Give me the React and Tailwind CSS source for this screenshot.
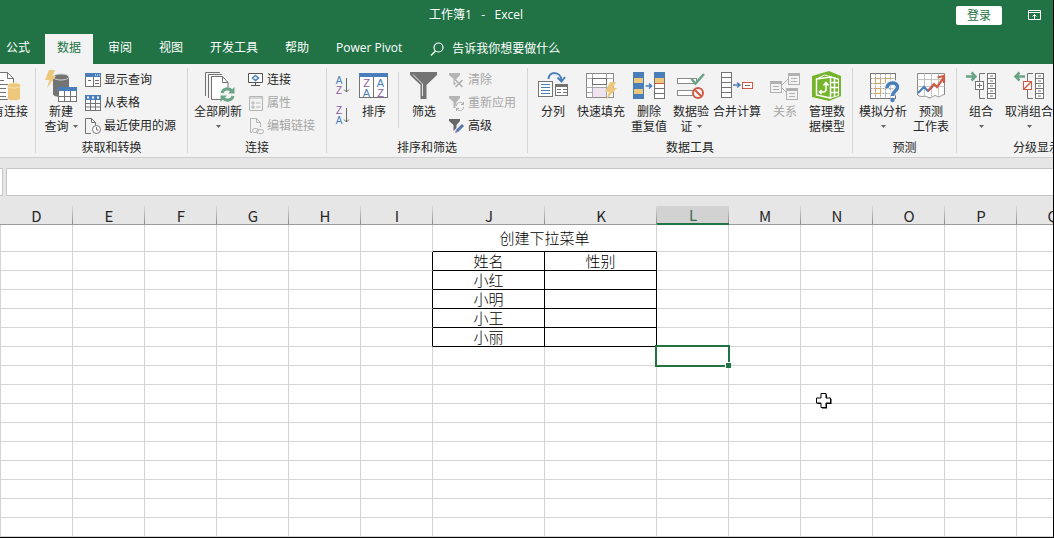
import React, { useState } from 'react';

const BLUE = '#4a7ebb';
const GRAY = '#737373';
const TAN = '#ecc77c';
const RED = '#d05a45';
const GREEN = '#6aa386';

/* ---------- icons ---------- */

const Icon = ({ small, children }) => (
    <svg
        className={`${small ? 'w-4 h-4' : 'w-8 h-8'} shrink-0 overflow-visible`}
        viewBox={small ? '0 0 16 16' : '0 0 32 32'}
        fill="none"
        stroke={GRAY}
        strokeWidth="1"
        aria-hidden="true"
    >
        {children}
    </svg>
);

const Bolt = ({ d }) => <path d={d} fill={TAN} stroke="none" />;

const ExistingIcon = () => (
    <Icon>
        <path d="M4.5 2.5h15l6 6v21h-21z" fill="#fff" />
        <path d="M19.5 2.5v6h6M8 10.5h8M8 14.5h12M8 18.5h10M8 22.5h10M8 26.5h10" />
        <path d="M19.5 15.5v13c0 3 13 3 13 0v-13z" fill={TAN} stroke="#f3f3f3" />
        <ellipse cx="26" cy="15.5" rx="6.5" ry="2.5" fill={TAN} stroke="#f7e3b6" />
    </Icon>
);

const NewQueryIcon = () => (
    <Icon>
        <path d="M8 7v17c0 4 16 4 16 0V7z" fill={GRAY} stroke="none" />
        <ellipse cx="16" cy="7" rx="8" ry="3" fill={GRAY} stroke="#cfcfcf" />
        <Bolt d="M4 0h6L7.500 6H11L2 18l2.500-8H0z" />
        <rect x="13.500" y="17.500" width="18" height="14" fill="#fff" />
        <path d="M13 17h19v4H13z" fill={BLUE} stroke="none" />
        <path d="M13.500 26.500h18M19.500 21v10.500M25.500 21v10.500" />
    </Icon>
);

const ShowQueryIcon = () => (
    <Icon small>
        <rect x=".5" y="1.500" width="15" height="13" fill="#fff" />
        <path d="M0 1h16v4H0z" fill={BLUE} stroke="none" />
        <path d="M10 3h1M12 3h1M14 3h1" stroke="#fff" />
        <path d="M8.500 5v9.500M3 8.500h3M10 8.500h4M10 11.500h4" />
    </Icon>
);

const FromTableIcon = () => (
    <Icon small>
        <rect x=".5" y=".5" width="15" height="15" fill="#fff" />
        <path d="M0 0h16v5H0z" fill={BLUE} stroke="none" />
        <path d="M2 2.500h2M7 2.500h2M12 2.500h2" stroke="#fff" strokeWidth="2" />
        <path d="M0 8.500h16M0 12h16M5.500 5v11M10.500 5v11" />
    </Icon>
);

const RecentIcon = () => (
    <Icon small>
        <path d="M6 15.500H.5V.5h6l4 4V7M6.500.5v4h4" />
        <circle cx="11.500" cy="11.500" r="4" fill="#fff" />
        <path d="M11.500 9v3h2" />
    </Icon>
);

const RefreshIcon = () => (
    <Icon>
        <path d="M3.500 26V2.500H18M6.500 28V4.500H20" />
        <path d="M9.500 6.500h11l5.500 6v17H9.500z" fill="#fff" />
        <path d="M20.500 6.500v6h5.500" />
        <circle cx="25.500" cy="24.500" r="7.500" fill="#f3f3f3" stroke="none" />
        <path d="M20 23c1-4.500 7-5.500 10-2M31 26c-1 4.500-7 5.500-10 2" stroke={GREEN} strokeWidth="3" />
        <path d="M32.500 17v6.500H26zM18.500 32v-6.500H25z" fill={GREEN} stroke="none" />
    </Icon>
);

const ConnectionIcon = () => (
    <Icon small>
        <path d="M.5 1.500h14v9H.5z" fill="#fff" stroke="#555" />
        <path d="M3 13.500h9M7.500 11v2" stroke="#555" />
        <path d="M7.500 3.500l3 2.500-3 2.500-3-2.500z" stroke={BLUE} strokeWidth="1.500" />
    </Icon>
);

const PropertiesIcon = () => (
    <Icon small>
        <g stroke="#b5b5b5">
            <path d="M1.500 1.500h13v14h-13zM1 3h14" />
            <path d="M4 7h2v2H4zM4 11h2v2H4zM8 8h4.500M8 12h4.500" />
        </g>
    </Icon>
);

const EditLinkIcon = () => (
    <Icon small>
        <g stroke="#b5b5b5">
            <path d="M4 14.500H2.500V.5h6l4 4V9M8.500.5v4h4" />
            <rect x="4.500" y="10.500" width="6" height="4" rx="2" />
            <rect x="8.500" y="11.500" width="7" height="4" rx="2" />
        </g>
    </Icon>
);

const letterFont = 'Liberation Sans, sans-serif';

const SortIcon = ({ top, bottom, topColor, bottomColor }) => (
    <svg className="w-4 h-5 overflow-visible" viewBox="0 0 16 20" fill="none" aria-hidden="true">
        <text x="5" y="8" fontSize="10" textAnchor="middle" fontFamily={letterFont} fill={topColor}>{top}</text>
        <text x="5" y="18" fontSize="10" textAnchor="middle" fontFamily={letterFont} fill={bottomColor}>{bottom}</text>
        <path d="M12.500 2v14M10 13.500l2.500 2.500 2.500-2.500" stroke="#666" />
    </svg>
);

const SortDialogIcon = () => (
    <Icon>
        <rect x="1.500" y="3.500" width="28" height="24" fill="#fff" />
        <path d="M1 3h29v4H1z" fill={BLUE} stroke="none" />
        <path d="M15.500 7v20.500" />
        <g stroke="none" fontSize="11" textAnchor="middle" fontFamily={letterFont}>
            <text x="8.500" y="16.500" fill="#8d5aa0">Z</text>
            <text x="8.500" y="26.500" fill={BLUE}>A</text>
            <text x="22.500" y="16.500" fill={BLUE}>A</text>
            <text x="22.500" y="26.500" fill="#8d5aa0">Z</text>
        </g>
    </Icon>
);

const FilterIcon = () => (
    <Icon>
        <path d="M2 2h27v3L18.500 15v14h-6V15L2 5z" fill={GRAY} stroke="none" />
        <path d="M5 4.500l9.500 9.500v12" stroke="#e4e4e4" />
    </Icon>
);

const ClearIcon = () => (
    <Icon small>
        <path d="M0 1h11v2L7.500 7v6h-3V7L0 3z" fill="#b5b5b5" stroke="none" />
        <path d="M6.500 8l7 7M13.500 8l-7 7" stroke="#f3f3f3" strokeWidth="4" />
        <path d="M6.500 8l7 7M13.500 8l-7 7" stroke="#ababab" strokeWidth="1.500" />
    </Icon>
);

const ReapplyIcon = () => (
    <Icon small>
        <path d="M0 1h11v2L7.500 7v6h-3V7L0 3z" fill="#b5b5b5" stroke="none" />
        <circle cx="11" cy="11.500" r="4.500" fill="#f3f3f3" stroke="none" />
        <path d="M7.500 11c0-4 5-5 7-1.500V7M14.500 9.500H12M14.500 12c0 4-5 5-7 1.500V16M7.500 13.500H10" stroke="#ababab" />
    </Icon>
);

const AdvancedIcon = () => (
    <Icon small>
        <path d="M0 1h11v2L7.500 7v6h-3V7L0 3z" fill="#666" stroke="none" />
        <path d="M6.500 14.500L14 7" stroke="#f3f3f3" strokeWidth="5" />
        <path d="M8 13l6-6" stroke="#5674b5" strokeWidth="3" />
        <path d="M6 15l1-3 2 2z" fill="#8a63a8" stroke="none" />
    </Icon>
);

const SplitIcon = () => (
    <Icon>
        <rect x="1.500" y="11.500" width="14" height="15" fill="#fff" />
        <path d="M4 14.500h9M4 17.500h9M4 20.500h9M4 23.500h9" stroke={BLUE} />
        <rect x="18.500" y="14.500" width="12" height="11" fill="#fff" />
        <path d="M18 14h13v3H18z" fill={GRAY} stroke="none" />
        <path d="M20 19.500h4M26 19.500h4M20 22.500h4M26 22.500h4" />
        <path d="M11.500 9c0-8 12-8 13 1" stroke={BLUE} strokeWidth="2" />
        <path d="M20.500 7.500l4 4 3.500-4.500" stroke={BLUE} strokeWidth="2" />
    </Icon>
);

const FlashFillIcon = () => (
    <Icon>
        <rect x="1.500" y="3.500" width="27" height="24" fill="#fff" stroke="#8a8a8a" />
        <path d="M8 18h13v9H8z" fill="#efe3ef" stroke="none" />
        <path d="M1.500 8.500h27M1.500 17.500h27M1.500 22.500h6M7.500 3.500v24M21.500 3.500v24" stroke="#a8a8a8" />
        <rect x="7.500" y="8.500" width="14" height="6" fill="#fff" stroke={GRAY} />
        <Bolt d="M25 12h6l-3 6h4L21 30l3-8h-4z" />
    </Icon>
);

const DedupeIcon = () => (
    <Icon>
        <path d="M0 2h11v27H0z" fill={BLUE} stroke="none" />
        <path d="M1 8h9v5H1zM1 19h9v5H1z" fill={TAN} stroke="none" />
        <path d="M12.500 16h6M16 13.500l2.500 2.500-2.500 2.500" stroke={BLUE} strokeWidth="1.500" />
        <rect x="21.500" y="2.500" width="10" height="26" fill="#fff" />
        <path d="M21 2h11v6H21z" fill={BLUE} stroke="none" />
        <path d="M22 8h9v5h-9z" fill={TAN} stroke="none" />
        <path d="M21.500 13.500h10" stroke={RED} />
        <path d="M21.500 18.500h10M21.500 23.500h10" />
    </Icon>
);

const ValidateIcon = () => (
    <Icon>
        <rect x="2.500" y="8.500" width="19" height="5" fill="#fff" stroke="#8a8a8a" />
        <rect x="2.500" y="20.500" width="19" height="5" fill="#fff" stroke="#8a8a8a" />
        <path d="M16.500 9l4 4.500L29 4" stroke={GREEN} strokeWidth="2.500" />
        <circle cx="23" cy="23" r="5" fill="#f3f3f3" stroke={RED} strokeWidth="2" />
        <path d="M19.500 19.500l7 7" stroke={RED} strokeWidth="2" />
    </Icon>
);

const ConsolidateIcon = () => (
    <Icon>
        <rect x=".5" y="2.500" width="10" height="25" fill="#fff" />
        <path d="M.5 7.500h10M.5 12.500h10M.5 17.500h10M.5 22.500h10" />
        <path d="M12 15h7M16 12.500l3 2.500-3 2.500" stroke={BLUE} strokeWidth="1.500" />
        <rect x="21.500" y="12.500" width="10" height="6" fill="#fff" stroke={RED} />
        <path d="M24 15.500h5" />
    </Icon>
);

const RelationIcon = () => (
    <Icon>
        <path d="M13 15l6-6M13 18l5 5" stroke="#b0b0b0" />
        {[[1, 11], [19, 3], [17, 18]].map(([x, y]) => (
            <g key={x} transform={`translate(${x} ${y})`} stroke="#b0b0b0">
                <rect x=".5" y=".5" width="11" height="11" fill="#f3f3f3" />
                <path d="M0 1.500h12" strokeWidth="3" />
                <path d="M3 5.500h6M3 8.500h6" />
            </g>
        ))}
    </Icon>
);

const DataModelIcon = () => (
    <Icon>
        <path d="M1 6L18 1l12 5v20l-12 5L1 27z" fill="#74b52b" stroke="none" />
        <g stroke="#fff">
            <path d="M5.500 9l14-2v21l-14-3z" strokeWidth="1.500" />
            <path d="M5.500 9l8-4 14 4-8-2M19.500 7l8 2.500v16l-8 2.500" />
            <path d="M19.500 12.500h8M19.500 17.500h8M19.500 22.500h8M23.500 8v19" strokeWidth="1.500" />
            <path d="M9 22h3.500c2 0 2.500-1 2.500-3v-6M12.500 15.500L15 12.500l2.500 3M10.500 20L8.500 22l2 2" strokeWidth="1.500" />
        </g>
    </Icon>
);

const WhatIfIcon = () => (
    <Icon>
        <rect x="3.500" y="3.500" width="25" height="25" fill="#fff" />
        <path d="M3.500 8.500h25M3.500 13.500h25M3.500 18.500h25M3.500 23.500h25M8.500 3.500v25M13.500 3.500v25M18.500 3.500v25M23.500 3.500v25" stroke="#a0a0a0" strokeDasharray="2 1" />
        <path d="M8.500 8.500h5v5h-5zM18.500 8.500h5v5h-5zM8.500 18.500h5v5h-5z" fill="#fff" stroke="#dca05c" />
        <path d="M20 17c0-6 10-6 10-.5 0 4-4.500 4-4.500 9" stroke="#f3f3f3" strokeWidth="6" />
        <path d="M20 18c0-6.500 10.500-6.500 10.500-1 0 4-5 4-5 9" stroke={BLUE} strokeWidth="3.500" />
        <circle cx="25.500" cy="30" r="2.200" fill={BLUE} stroke="none" />
    </Icon>
);

const ForecastIcon = () => (
    <Icon>
        <path d="M2.500 3.500h27v21c-3 0-5 4-8 1.500-3-2-5 4-9 1-3-2-6 1-10-2z" fill="#fff" stroke="#8a8a8a" />
        <path d="M2.500 9.500h27M2.500 16.500h27M9.500 3.500v23M16.500 3.500v23M23.500 3.500v22" stroke="#c4c4c4" />
        <path d="M3 23l6-6 4 4 5-5" stroke={BLUE} strokeWidth="2.200" />
        <path d="M13 21l6-7 3 3 6.500-9" stroke={RED} strokeWidth="2.200" />
        <path d="M22.500 7.500L29 6v7" stroke={RED} strokeWidth="2.200" />
    </Icon>
);

const OutlineIcon = ({ ungroup }) => (
    <Icon>
        {ungroup ? (
            <path d="M12 6.500H3M6.500 2.500L2.500 6.500l4 4" stroke={GREEN} strokeWidth="2.500" />
        ) : (
            <path d="M1 6.500h9M6.500 2.500l4 4-4 4" stroke={GREEN} strokeWidth="2.500" />
        )}
        <path d="M20 3.500h-5.500V11M14.500 20v8.500H20" />
        <rect x="10.500" y="11.500" width="8" height="8" fill="#fff" stroke={ungroup ? RED : GRAY} />
        {ungroup ? <path d="M11 19l7-7" stroke={RED} strokeWidth="1.500" /> : <path d="M12 15.500h5M14.500 13v5" />}
        <rect x="22.500" y="3.500" width="8" height="25" fill="#fff" />
        <path d="M22.500 8.500h8M22.500 13.500h8M22.500 18.500h8M22.500 23.500h8M25 6h3M25 11h3M25 16h3M25 21h3M25 26h3" />
    </Icon>
);

const Caret = () => (
    <svg className="w-[5px] h-[3px] shrink-0" viewBox="0 0 5 3" aria-hidden="true">
        <path d="M0 0h5L2.500 3z" fill="#666" />
    </svg>
);

/* ---------- ribbon ---------- */

const BigButton = ({ icon, lines, caret, width = 'w-12', disabled }) => (
    <button
        disabled={disabled}
        className={`${width} shrink-0 flex flex-col items-center gap-0.5 pt-0.5 whitespace-nowrap ${disabled ? 'text-[#a6a6a6]' : ''}`}
    >
        {icon}
        <span className="flex flex-col items-center leading-[15px]">
            <span>{lines[0]}</span>
            <span className="flex items-center gap-1 h-[15px]">
                {lines[1]}
                {caret && <Caret />}
            </span>
        </span>
    </button>
);

const SmallButton = ({ icon, label, disabled }) => (
    <button
        disabled={disabled}
        className={`flex items-center gap-[3px] h-[23px] whitespace-nowrap ${disabled ? 'text-[#a6a6a6]' : ''}`}
    >
        {icon}
        {label}
    </button>
);

const Group = ({ label, className = '', children }) => (
    <>
        <section className="shrink-0 flex flex-col" aria-label={label}>
            <div className={`flex h-[72px] ${className}`}>{children}</div>
            <div className="h-4 leading-4 text-center whitespace-nowrap">{label}</div>
        </section>
        <span className="w-px h-[85px] bg-[#d5d5d5] shrink-0 last:hidden" />
    </>
);

const Ribbon = () => (
    <div className="flex shrink-0 pt-1 pb-px bg-[#f3f3f3] border-b border-[#cfcfcf] overflow-hidden">
        <div className="w-[35px] flex justify-end pr-[7px] shrink-0">
            <BigButton icon={<ExistingIcon />} lines={['现有连接']} />
        </div>
        <span className="w-px h-[85px] bg-[#d5d5d5] shrink-0" />
        <Group label="获取和转换" className="pl-1 pr-[11px] gap-[3px]">
            <BigButton icon={<NewQueryIcon />} lines={['新建', '查询']} caret width="w-[42px]" />
            <div className="flex flex-col">
                <SmallButton icon={<ShowQueryIcon />} label="显示查询" />
                <SmallButton icon={<FromTableIcon />} label="从表格" />
                <SmallButton icon={<RecentIcon />} label="最近使用的源" />
            </div>
        </Group>
        <Group label="连接" className="pl-1 pr-[11px] gap-1">
            <BigButton icon={<RefreshIcon />} lines={['全部刷新']} caret width="w-[52px]" />
            <div className="flex flex-col">
                <SmallButton icon={<ConnectionIcon />} label="连接" />
                <SmallButton icon={<PropertiesIcon />} label="属性" disabled />
                <SmallButton icon={<EditLinkIcon />} label="编辑链接" disabled />
            </div>
        </Group>
        <Group label="排序和筛选" className="pl-[7px] pr-[11px]">
            <div className="flex flex-col gap-2.5 pt-2">
                <button aria-label="升序">
                    <SortIcon top="A" bottom="Z" topColor={BLUE} bottomColor="#8d5aa0" />
                </button>
                <button aria-label="降序">
                    <SortIcon top="Z" bottom="A" topColor="#8d5aa0" bottomColor={BLUE} />
                </button>
            </div>
            <BigButton icon={<SortDialogIcon />} lines={['排序']} />
            <span className="w-px h-14 mt-1 mr-[3px] bg-[#d5d5d5]" />
            <BigButton icon={<FilterIcon />} lines={['筛选']} width="w-11" />
            <div className="flex flex-col pl-[3px]">
                <SmallButton icon={<ClearIcon />} label="清除" disabled />
                <SmallButton icon={<ReapplyIcon />} label="重新应用" disabled />
                <SmallButton icon={<AdvancedIcon />} label="高级" />
            </div>
        </Group>
        <Group label="数据工具" className="pl-px pr-[3px]">
            <BigButton icon={<SplitIcon />} lines={['分列']} />
            <BigButton icon={<FlashFillIcon />} lines={['快速填充']} />
            <BigButton icon={<DedupeIcon />} lines={['删除', '重复值']} />
            <BigButton icon={<ValidateIcon />} lines={['数据验', '证']} caret width="w-9" />
            <BigButton icon={<ConsolidateIcon />} lines={['合并计算']} width="w-14" />
            <BigButton icon={<RelationIcon />} lines={['关系']} width="w-10" disabled />
            <BigButton icon={<DataModelIcon />} lines={['管理数', '据模型']} width="w-11" />
        </Group>
        <Group label="预测" className="pl-1.5 pr-px">
            <BigButton icon={<WhatIfIcon />} lines={['模拟分析']} caret />
            <BigButton icon={<ForecastIcon />} lines={['预测', '工作表']} />
        </Group>
        <Group label="分级显示" className="pr-16">
            <BigButton icon={<OutlineIcon />} lines={['组合']} caret />
            <BigButton icon={<OutlineIcon ungroup />} lines={['取消组合']} caret />
        </Group>
    </div>
);

/* ---------- header ---------- */

const tabs = ['公式', '数据', '审阅', '视图', '开发工具', '帮助', 'Power Pivot'];

const Header = () => {
    const [activeTab, setActiveTab] = useState('数据');

    return (
        <header className="bg-[#217346] text-white shrink-0">
            <div className="flex items-center h-[34px] pr-3">
                <h1 className="flex-1 text-center whitespace-pre pr-1 pb-1">工作簿1   -   Excel</h1>
                <button className="w-[46px] h-[19px] mr-[26px] mb-[3px] rounded-xs bg-white text-[#217346] leading-[19px]">登录</button>
                <button aria-label="功能区显示选项" className="mb-1">
                    <svg className="w-[13px] h-2.5" viewBox="0 0 13 10" fill="none" stroke="#fff">
                        <path d="M.5.5h12v9H.5zM.5 2.500h12M6.500 9V4.500M4.500 6.500l2-2 2 2" />
                    </svg>
                </button>
            </div>
            <div className="flex h-[30px] overflow-hidden">
                <nav className="flex gap-[3px] -ml-1.5 shrink-0">
                    {tabs.map((tab) => (
                        <button
                            key={tab}
                            onClick={() => setActiveTab(tab)}
                            className={`px-3 pb-0.5 ${tab === activeTab ? 'bg-[#f3f3f3] text-[#217346]' : ''}`}
                        >
                            {tab}
                        </button>
                    ))}
                </nav>
                <label className="flex items-center gap-2 ml-4 pb-px flex-1">
                    <svg className="w-3.5 h-3.5 shrink-0" viewBox="0 0 14 14" fill="none" stroke="#fff" strokeWidth="1.200">
                        <circle cx="8.500" cy="5.500" r="4.500" />
                        <path d="M5.500 9L1 13.500" />
                    </svg>
                    <input
                        aria-label="告诉我你想要做什么"
                        placeholder="告诉我你想要做什么"
                        className="w-full bg-transparent outline-none placeholder:text-white"
                    />
                </label>
            </div>
        </header>
    );
};

/* ---------- sheet ---------- */

const columns = ['D', 'E', 'F', 'G', 'H', 'I', 'J', 'K', 'L', 'M', 'N', 'O', 'P', 'Q'];
const names = { 2: '姓名', 3: '小红', 4: '小明', 5: '小王', 6: '小丽' };
const rows = Array.from({ length: 16 }, (_, i) => i + 1);

const colWidth = (col) => {
    if (col === 'D') return 'w-[73px]';
    if (col === 'J' || col === 'K') return 'w-[112px]';
    return 'w-[72px]';
};

const cellBorder = (col, row) => {
    const inTable = row >= 2 && row <= 6;
    const isData = col === 'J' || col === 'K';
    const right = inTable && (isData || col === 'I') ? 'border-r-black' : 'border-r-[#d4d4d4]';
    const bottom = inTable && isData ? 'border-b-black' : 'border-b-[#d4d4d4]';
    return `${right} ${bottom}`;
};

const cellText = (col, row) => {
    if (col === 'J') return names[row];
    if (col === 'K' && row === 2) return '性别';
    return null;
};

const Cell = ({ col, row }) => {
    if (row === 1 && col === 'K') return null;
    if (row === 1 && col === 'J') {
        return <td colSpan={2} className="border-r border-b border-r-[#d4d4d4] border-b-black">创建下拉菜单</td>;
    }
    const selected = col === 'L' && row === 7;
    return (
        <td className={`border-r border-b ${col === 'D' ? 'border-l border-l-[#d4d4d4]' : ''} ${cellBorder(col, row)} ${selected ? 'relative' : ''}`}>
            {cellText(col, row)}
            {selected && (
                <span className="absolute -inset-0.5 border-2 border-[#217346]">
                    <span className="absolute -right-[3px] -bottom-[3px] w-1.5 h-1.5 bg-[#217346] border-t border-l border-white" />
                </span>
            )}
        </td>
    );
};

const Sheet = () => (
    <main className="relative flex-1 min-h-0 overflow-hidden bg-white font-['Noto_Sans_CJK_SC',sans-serif]">
        <table className="table-fixed w-[1089px] border-separate border-spacing-0 text-center text-black">
            <colgroup>
                {columns.map((col) => (
                    <col key={col} className={colWidth(col)} />
                ))}
            </colgroup>
            <thead className="text-[15px] leading-[17px] text-[#262626]">
                <tr>
                    {columns.map((col) => (
                        <th
                            key={col}
                            scope="col"
                            className={`h-[19px] p-0 font-normal bg-[linear-gradient(to_bottom,#dcdcdc,#8c8c8c)] bg-no-repeat bg-right bg-[length:1px_100%] ${
                                col === 'L' ? 'bg-[#d2d2d2] text-[#3d6b52] border-b-2 border-[#217346]' : 'bg-[#e6e6e6] border-b border-[#9b9b9b]'
                            }`}
                        >
                            {col}
                        </th>
                    ))}
                </tr>
            </thead>
            <tbody className="text-[15px] leading-[18px] font-light">
                {rows.map((row) => (
                    <tr key={row} className={row === 1 ? 'h-[27px]' : 'h-[19px]'}>
                        {columns.map((col) => (
                            <Cell key={col} col={col} row={row} />
                        ))}
                    </tr>
                ))}
            </tbody>
        </table>
        {/* cell cursor */}
        <svg className="absolute left-[816px] top-[187px] w-4 h-4" viewBox="0 0 16 16" aria-hidden="true">
            <path d="M6 1.500h5v4.500h4.500v5H11v4.500H6V11H1.500V6H6z" fill="#000" />
            <path d="M5 .5h5v4.500h4.500v5H10v4.500H5V10H.5V5H5z" fill="#fff" stroke="#000" />
        </svg>
    </main>
);

const App = () => (
    <div className="h-screen flex flex-col overflow-hidden border-r border-b border-black bg-[#e6e6e6] text-xs text-[#262626] font-['Open_Sans','Noto_Sans_CJK_SC',sans-serif]">
        <Header />
        <Ribbon />
        <div className="flex gap-[3px] pt-2.5 pb-2.5 shrink-0">
            <input aria-label="名称框" className="w-[3px] h-7 bg-white border-y border-r border-[#c6c6c6] outline-none" />
            <input aria-label="编辑栏" className="flex-1 h-7 px-2 bg-white border-y border-l border-[#c6c6c6] outline-none" />
        </div>
        <Sheet />
    </div>
);

export default App;
